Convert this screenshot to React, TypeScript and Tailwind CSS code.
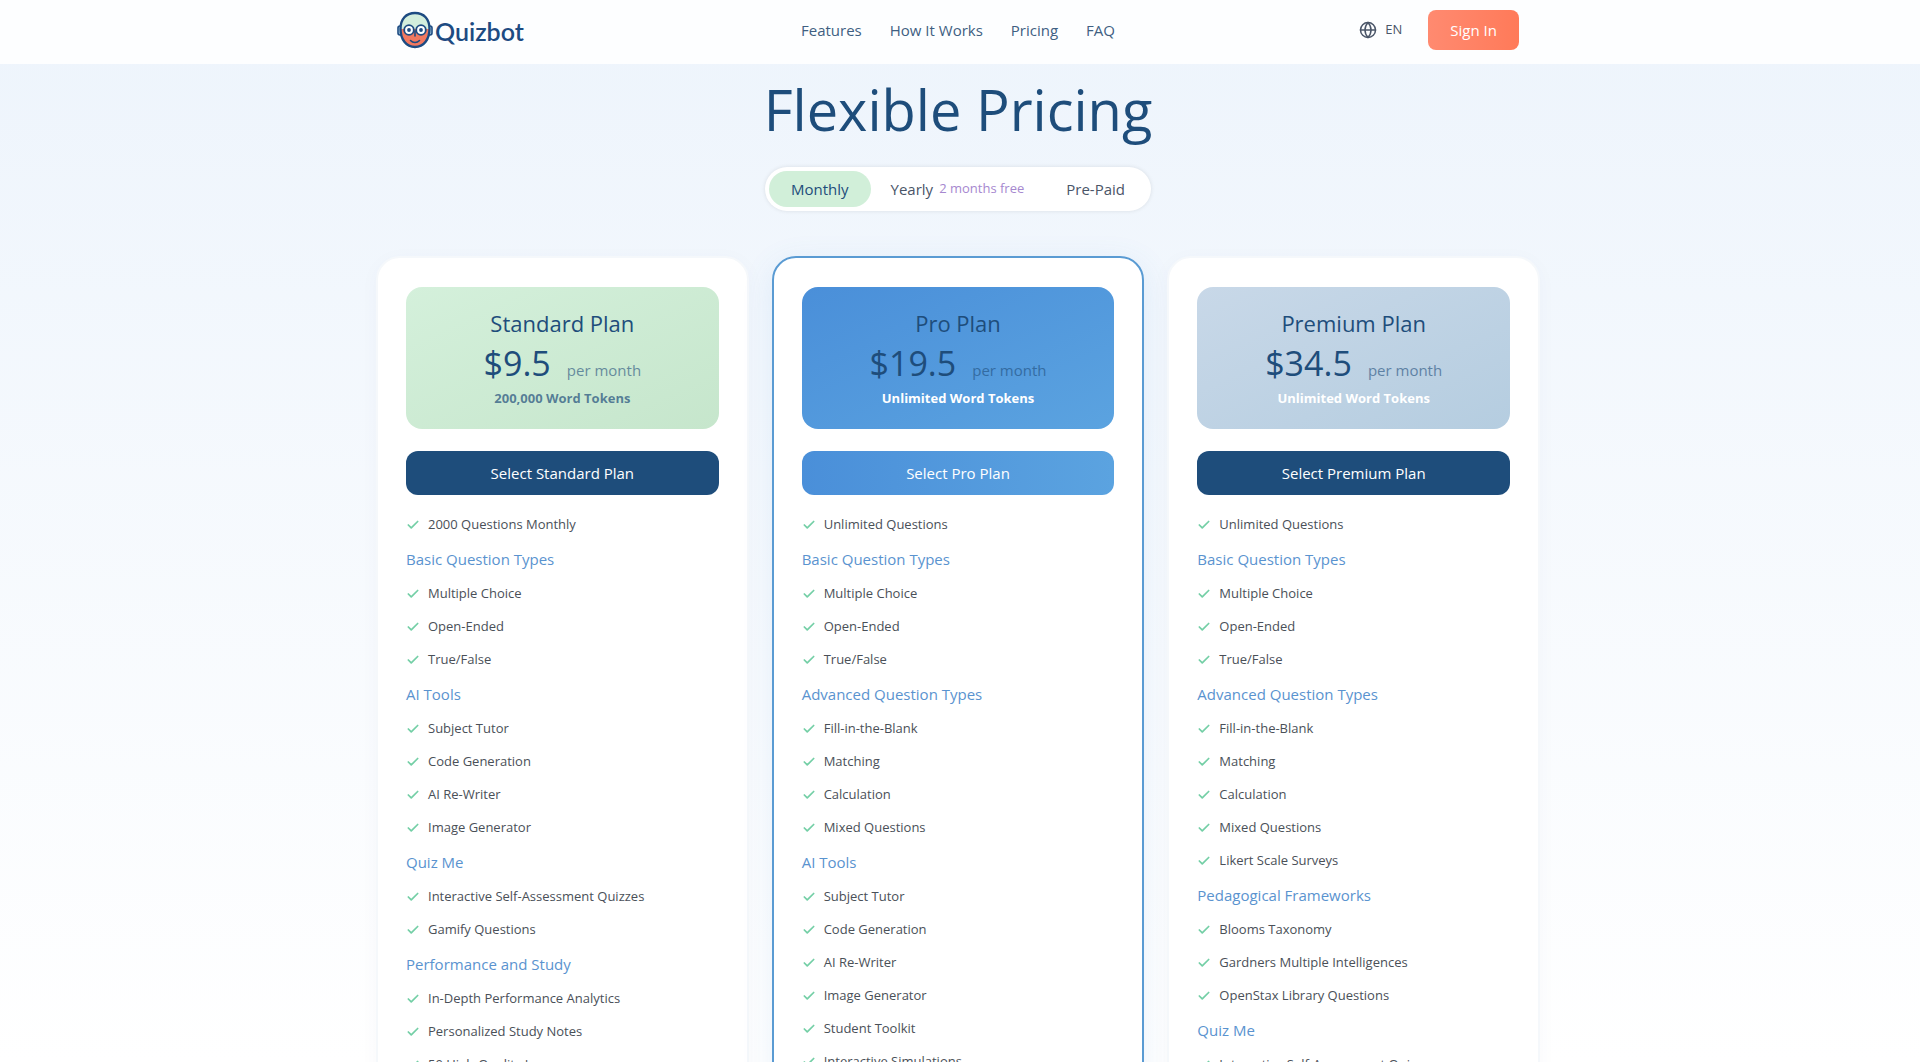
import { Check, Globe } from "lucide-react";
import clsx from "clsx";

type Section = { title?: string; items: string[] };

type Plan = {
  name: string;
  price: string;
  tokens: string;
  featured?: boolean;
  headerClass: string;
  tokensClass: string;
  buttonClass: string;
  sections: Section[];
};

const NAV = ["Features", "How It Works", "Pricing", "FAQ"];

const BASIC: Section = {
  title: "Basic Question Types",
  items: ["Multiple Choice", "Open-Ended", "True/False"],
};

const PLANS: Plan[] = [
  {
    name: "Standard Plan",
    price: "$9.5",
    tokens: "200,000 Word Tokens",
    headerClass: "from-[#d4f0db] to-[#c6e6cc]",
    tokensClass: "text-[#1e4d7b]/70",
    buttonClass: "bg-[#1e4d7b]",
    sections: [
      { items: ["2000 Questions Monthly"] },
      BASIC,
      { title: "AI Tools", items: ["Subject Tutor", "Code Generation", "AI Re-Writer", "Image Generator"] },
      { title: "Quiz Me", items: ["Interactive Self-Assessment Quizzes", "Gamify Questions"] },
      {
        title: "Performance and Study",
        items: ["In-Depth Performance Analytics", "Personalized Study Notes", "50 High-Quality Images"],
      },
    ],
  },
  {
    name: "Pro Plan",
    price: "$19.5",
    tokens: "Unlimited Word Tokens",
    featured: true,
    headerClass: "from-[#4a8fd9] to-[#5ba3e0]",
    tokensClass: "text-white",
    buttonClass: "bg-linear-to-r from-[#4a8fd9] to-[#5ba3e0]",
    sections: [
      { items: ["Unlimited Questions"] },
      BASIC,
      {
        title: "Advanced Question Types",
        items: ["Fill-in-the-Blank", "Matching", "Calculation", "Mixed Questions"],
      },
      {
        title: "AI Tools",
        items: [
          "Subject Tutor",
          "Code Generation",
          "AI Re-Writer",
          "Image Generator",
          "Student Toolkit",
          "Interactive Simulations",
        ],
      },
    ],
  },
  {
    name: "Premium Plan",
    price: "$34.5",
    tokens: "Unlimited Word Tokens",
    headerClass: "from-[#c8d8e8] to-[#b5cde0]",
    tokensClass: "text-white",
    buttonClass: "bg-[#1e4d7b]",
    sections: [
      { items: ["Unlimited Questions"] },
      BASIC,
      {
        title: "Advanced Question Types",
        items: ["Fill-in-the-Blank", "Matching", "Calculation", "Mixed Questions", "Likert Scale Surveys"],
      },
      {
        title: "Pedagogical Frameworks",
        items: ["Blooms Taxonomy", "Gardners Multiple Intelligences", "OpenStax Library Questions"],
      },
      { title: "Quiz Me", items: ["Interactive Self-Assessment Quizzes"] },
    ],
  },
];

function LogoMark() {
  return (
    <svg viewBox="0 0 36 38" className="h-[38px] w-9" aria-hidden="true">
      <rect x="1" y="15" width="6" height="9" rx="2" fill="#bfe0ee" stroke="#1d4b82" strokeWidth="1.6" />
      <rect x="29" y="15" width="6" height="9" rx="2" fill="#bfe0ee" stroke="#1d4b82" strokeWidth="1.6" />
      <path d="M3.500 18C3.500 8 9 2 18 2s14.500 6 14.500 16z" fill="#d3eedd" />
      <path d="M3.500 18h29c0 11-5.500 18-14.500 18S3.500 29 3.500 18z" fill="#f2785f" />
      <path
        d="M18 2C9 2 3.500 8 3.500 18S9 36 18 36s14.500-8 14.500-18S27 2 18 2z"
        fill="none"
        stroke="#1d4b82"
        strokeWidth="2.4"
      />
      <circle cx="12" cy="19" r="4.800" fill="#fff" stroke="#1d4b82" strokeWidth="1.8" />
      <circle cx="24" cy="19" r="4.800" fill="#fff" stroke="#1d4b82" strokeWidth="1.8" />
      <circle cx="12" cy="19" r="1.900" fill="#1d4b82" />
      <circle cx="24" cy="19" r="1.900" fill="#1d4b82" />
      <path
        d="M18 20v5M13.500 29.500c2.500 2.600 6.500 2.600 9 0"
        fill="none"
        stroke="#1d4b82"
        strokeWidth="1.6"
        strokeLinecap="round"
      />
    </svg>
  );
}

function Header() {
  return (
    <header className="bg-[#fdfeff] pr-1">
      <div className="mx-auto flex h-16 max-w-[1122px] items-center justify-between pb-1">
        <a href="#" className="flex flex-1 items-center gap-0.5">
          <LogoMark />
          <span className="pt-0.5 font-[Lato,sans-serif] text-[25px] leading-8 font-semibold text-[#1d4b82]">
            Quizbot
          </span>
        </a>
        <nav className="flex gap-7">
          {NAV.map((label) => (
            <a key={label} href="#" className="text-[15px] text-[#3f5f82]">
              {label}
            </a>
          ))}
        </nav>
        <div className="flex flex-1 items-center justify-end gap-[26px]">
          <button type="button" className="flex items-center gap-2 text-[13px] text-[#4a5568]">
            <Globe size={18} aria-hidden="true" />
            EN
          </button>
          <button
            type="button"
            className="h-10 rounded-lg bg-linear-to-r from-[#ff8a70] to-[#ff7a59] px-[22px] text-[15px] font-medium text-white"
          >
            Sign In
          </button>
        </div>
      </div>
    </header>
  );
}

function BillingToggle() {
  return (
    <div className="flex rounded-full bg-white p-1 text-[15px] text-[#4a5568] shadow-[0_0_4px_rgba(0,0,0,0.1)]">
      <button type="button" aria-pressed="true" className="h-9 rounded-full bg-[#d1efd9] px-[22px] text-[#1e4d7b]">
        Monthly
      </button>
      <button type="button" className="flex h-9 items-center gap-1.5 px-5">
        Yearly <span className="text-[13px] text-[#a688cf]">2 months free</span>
      </button>
      <button type="button" className="h-9 px-[22px]">
        Pre-Paid
      </button>
    </div>
  );
}

function PlanCard({ plan }: { plan: Plan }) {
  return (
    <article
      className={clsx(
        "flex-1 rounded-3xl border-2 bg-white px-7 pt-[29px] pb-8",
        plan.featured
          ? "border-[#5a9bd3] shadow-[0_8px_32px_rgba(74,143,217,0.12)]"
          : "border-[#f5f8fb] shadow-[0_4px_20px_rgba(30,77,123,0.03)]",
      )}
    >
      <div className={clsx("h-[142px] rounded-2xl bg-linear-to-br pt-5 text-center text-[#1e4d7b]", plan.headerClass)}>
        <h2 className="text-[22px] leading-8">{plan.name}</h2>
        <p className="mt-1 flex items-baseline justify-center gap-4 leading-10">
          <span className="text-[34px]">{plan.price}</span>
          <span className="text-[15px] opacity-60">per month</span>
        </p>
        <p className={clsx("text-[13px] leading-4 font-bold", plan.tokensClass)}>{plan.tokens}</p>
      </div>
      <button
        type="button"
        className={clsx("mt-[22px] h-11 w-full rounded-xl text-[15px] font-medium text-white", plan.buttonClass)}
      >
        Select {plan.name}
      </button>
      <div className="mt-[13px]">
        {plan.sections.map((section) => (
          <section key={section.title ?? "quota"}>
            {section.title && <h3 className="py-2 text-[15px] leading-5 text-[#5a93cf]">{section.title}</h3>}
            <ul>
              {section.items.map((item) => (
                <li key={item} className="flex h-[33px] items-center gap-2 text-[13px] text-[#4a5058]">
                  <Check size={14} strokeWidth={3} className="text-[#74cfa6]" aria-hidden="true" />
                  {item}
                </li>
              ))}
            </ul>
          </section>
        ))}
      </div>
    </article>
  );
}

export default function App() {
  return (
    <div className="h-screen overflow-hidden bg-linear-to-b from-[#edf4fc] to-white font-['Open_Sans','Noto_Sans',sans-serif]">
      <Header />
      <div className="pr-1">
        <main className="mx-auto max-w-[1164px]">
          <div className="flex flex-col items-center pt-[13px]">
            <h1 className="text-[56px] leading-[64px] text-[#1e4d7b]">Flexible Pricing</h1>
            <div className="mt-[26px]">
              <BillingToggle />
            </div>
          </div>
          <div className="mt-[45px] flex items-start gap-[23px]">
            {PLANS.map((plan) => (
              <PlanCard key={plan.name} plan={plan} />
            ))}
          </div>
        </main>
      </div>
    </div>
  );
}
